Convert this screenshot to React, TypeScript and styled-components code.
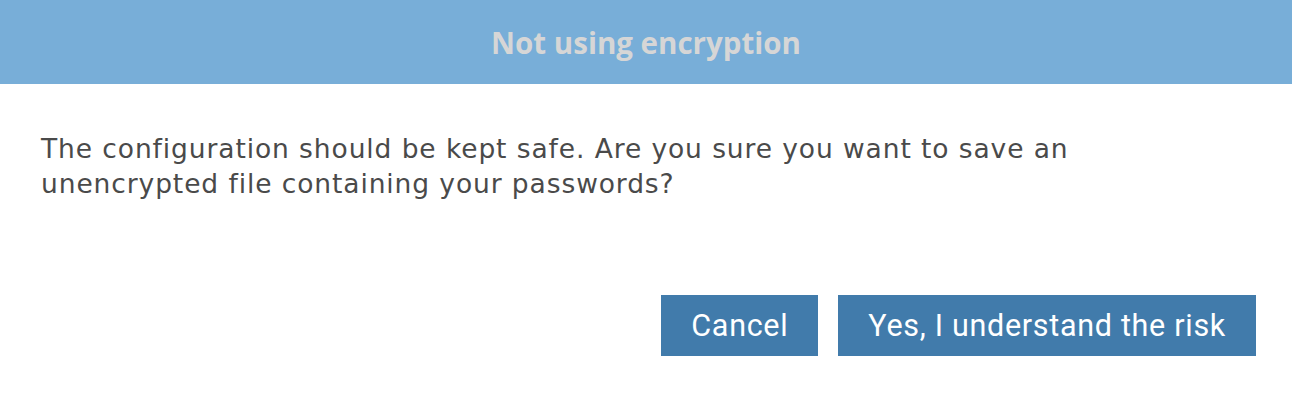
import styled, { createGlobalStyle } from "styled-components";

const GlobalStyle = createGlobalStyle`
  html, body {
    margin: 0;
    padding: 0;
    background: #ffffff;
  }
  body {
    font-family: "DejaVu Sans", "Noto Sans", sans-serif;
  }
`;

const Dialog = styled.div`
  display: flex;
  flex-direction: column;
  width: 1292px;
  height: 406px;
  background: #ffffff;
`;

const Header = styled.div`
  display: flex;
  align-items: center;
  justify-content: center;
  height: 84px;
  background-color: #78aed8;
`;

const Title = styled.h2`
  margin: 0;
  font-family: "Open Sans", "Noto Sans", sans-serif;
  font-size: 29.5px;
  font-weight: 700;
  color: #d6d6d6;
`;

const Body = styled.p`
  margin: 0;
  padding: 47px 41px 0;
  font-family: "DejaVu Sans", "Noto Sans", sans-serif;
  font-size: 26.5px;
  letter-spacing: 0.9px;
  line-height: 35px;
  color: #4a4a4a;
  max-width: 1080px;
`;

const Footer = styled.div`
  display: flex;
  justify-content: flex-end;
  gap: 20px;
  margin-top: auto;
  padding: 0 36px 50px;
`;

const Button = styled.button`
  height: 61px;
  padding: 0 30px;
  border: none;
  border-radius: 0;
  background-color: #417bab;
  color: #ffffff;
  font-family: Roboto, "Noto Sans", sans-serif;
  font-size: 30.5px;
  letter-spacing: 0.7px;
  cursor: pointer;
`;

function App() {
  return (
    <>
      <GlobalStyle />
      <Dialog>
        <Header>
          <Title>Not using encryption</Title>
        </Header>
        <Body>
          The configuration should be kept safe. Are you sure you want to save an
          unencrypted file containing your passwords?
        </Body>
        <Footer>
          <Button>Cancel</Button>
          <Button>Yes, I understand the risk</Button>
        </Footer>
      </Dialog>
    </>
  );
}

export default App;
